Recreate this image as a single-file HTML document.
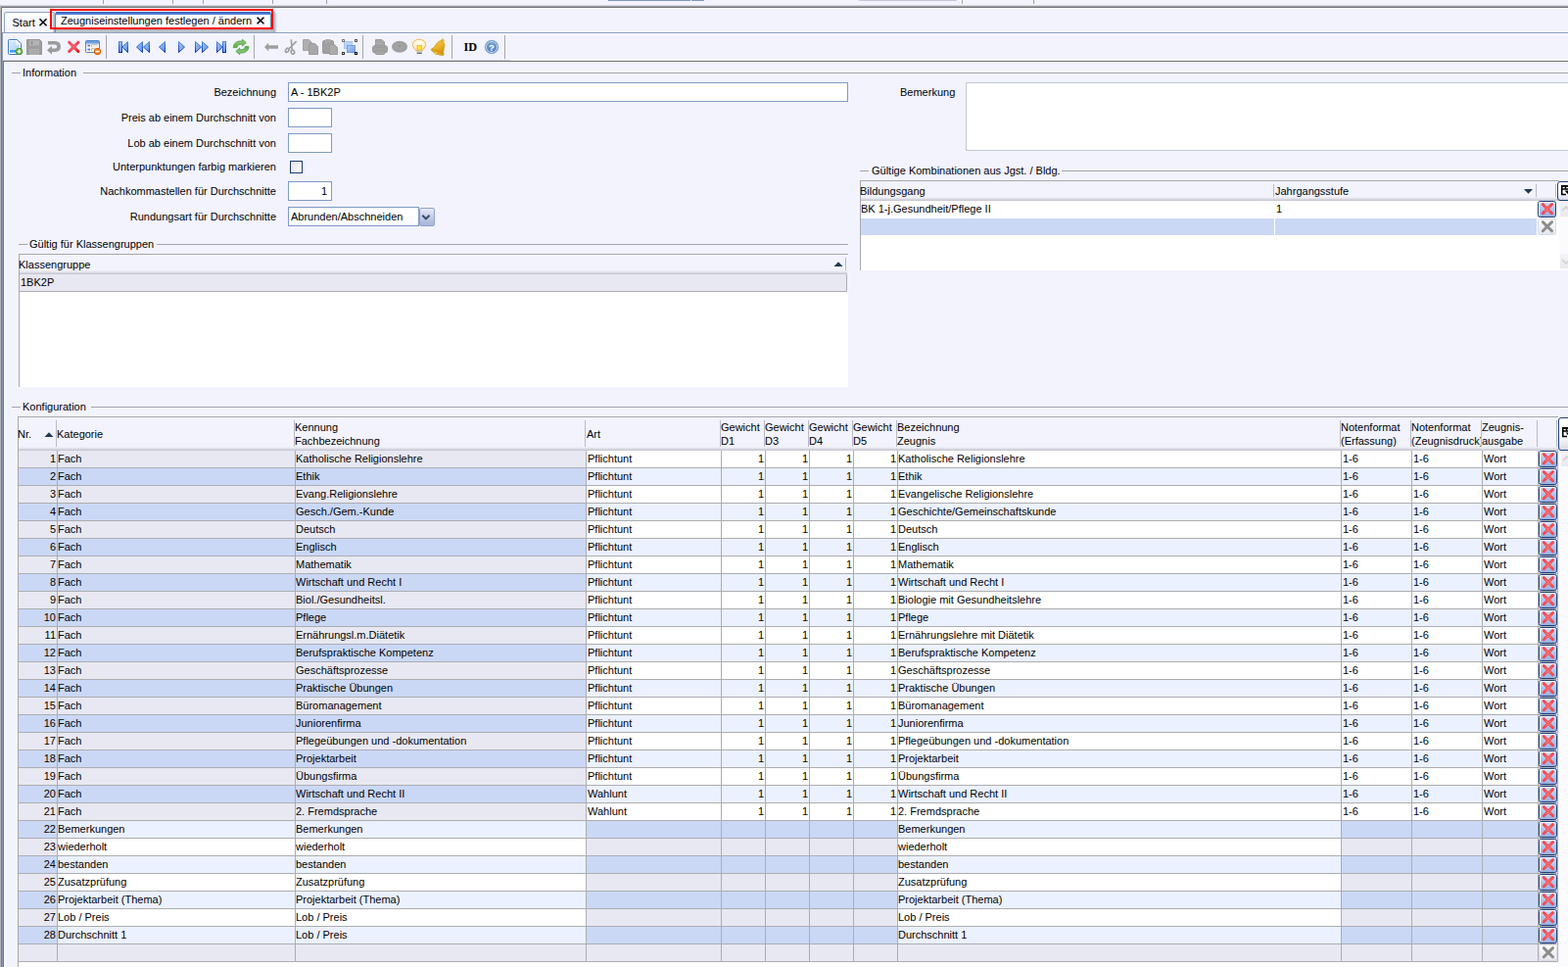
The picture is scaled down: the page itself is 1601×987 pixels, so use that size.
<!DOCTYPE html>
<html lang="de">
<head>
<meta charset="utf-8">
<title>Zeugniseinstellungen festlegen / ändern</title>
<style>
html,body{margin:0;padding:0;}
body{width:1601px;height:987px;overflow:hidden;position:relative;background:#F2F3FD;
 font-family:"Liberation Sans",sans-serif;font-size:11px;color:#000;line-height:13px;}
.abs,#page div,#page span,#page svg{position:absolute;}
#page{position:absolute;left:0;top:0;width:1601px;height:987px;overflow:hidden;}
.t{white-space:nowrap;height:13px;line-height:13px;}
.lbl{white-space:nowrap;height:13px;line-height:13px;text-align:right;width:270px;left:12px;}
.inp{background:#fff;border:1px solid #7F9AC4;box-sizing:border-box;height:20px;line-height:18px;white-space:nowrap;}
.hl{height:1px;background:#A3A3AB;}
.vs{width:1px;background:#A6A6AE;}
.row{left:0;width:1601px;height:18px;}
.row .c{top:0;height:17px;line-height:17px;white-space:nowrap;overflow:hidden;box-sizing:border-box;padding-left:0;}
.row .c.r{text-align:right;padding-right:1px;padding-left:0;}
.row .del,.row .del2{top:0;width:19px;height:17px;background:#F2F3FD;}
.row .del2{background:linear-gradient(#FFFFFF,#ECECF2);}
.hd{white-space:nowrap;line-height:14px;}
</style>
</head>
<body>
<svg width="0" height="0" style="position:absolute">
<defs>
<linearGradient id="gbtn" x1="0" y1="0" x2="0" y2="1"><stop offset="0" stop-color="#D6E2FA"/><stop offset="0.5" stop-color="#B2C5EE"/><stop offset="1" stop-color="#98B0E2"/></linearGradient>
<linearGradient id="gbtn2" x1="0" y1="0" x2="0" y2="1"><stop offset="0" stop-color="#FFFFFF"/><stop offset="1" stop-color="#E4E4EC"/></linearGradient>
<g id="redx">
 <rect x="0.5" y="0.5" width="18" height="16" rx="2" fill="url(#gbtn)" stroke="#1F3E7C"/>
 <path d="M1.500 15 V2 Q1.500 1.500 2 1.500 H17" fill="none" stroke="#FFFFFF" stroke-width="1" opacity="0.9"/>
 <path d="M5.300 3.600 L14.500 12.800 M14.500 3.600 L5.300 12.800" stroke="#F24A4E" stroke-width="2.900" stroke-linecap="round"/>
 <path d="M7.500 5.800 L12.300 10.600 M12.300 5.800 L7.500 10.600" stroke="#FF8888" stroke-width="1.200" stroke-linecap="round" opacity="0.7"/>
</g>
<g id="grayx">
 <rect x="0.5" y="0.5" width="18" height="16" rx="2" fill="url(#gbtn2)" stroke="#D9D9E1"/>
 <path d="M5.300 3.600 L14.500 12.800 M14.500 3.600 L5.300 12.800" stroke="#8C8C8C" stroke-width="2.900" stroke-linecap="round"/>
</g>
<g id="chooser">
 <path d="M0.75 0 H12 M0.75 0 V9.5 H5 M0.75 4 H12 M4.5 0 V4 M9.5 0 V4" fill="none" stroke="#000" stroke-width="1.5"/>
 <path d="M0 0.75 H12" stroke="#000" stroke-width="2.2"/>
 <path d="M3.5 5.5 H12 L7.75 10 Z" fill="#000"/>
</g>
<g id="chevup"><path d="M1 6 L5 2 L9 6" fill="none" stroke="#D4D4D8" stroke-width="1.8"/></g>
<g id="chevdn"><path d="M1 2 L5 6 L9 2" fill="none" stroke="#D4D4D8" stroke-width="1.8"/></g>
</defs>
</svg>
<div id="page">
<!-- top strip -->
<div style="left:105px;top:0;width:1px;height:4px;background:#A0A0AA"></div>
<div style="left:176px;top:0;width:1px;height:4px;background:#A0A0AA"></div>
<div style="left:207px;top:0;width:1px;height:4px;background:#A0A0AA"></div>
<div style="left:278px;top:0;width:1px;height:4px;background:#A0A0AA"></div>
<div style="left:333px;top:0;width:1px;height:4px;background:#A0A0AA"></div>
<div style="left:982px;top:0;width:1px;height:4px;background:#A0A0AA"></div>
<div style="left:1055px;top:0;width:1px;height:4px;background:#A0A0AA"></div>
<div style="left:621px;top:0;width:84px;height:1px;background:#7C97BE"></div>
<div style="left:706px;top:0;width:13px;height:1px;background:#7C97BE"></div>
<div style="left:877px;top:0;width:100px;height:1px;background:#C6C6D0;border-radius:0 0 3px 3px"></div>
<div style="left:0;top:5px;width:1601px;height:1px;background:#D6D6DF"></div>
<div style="left:0;top:6px;width:1601px;height:1px;background:#A2A2A9"></div>
<div style="left:0;top:7px;width:1601px;height:1px;background:#717174"></div>
<div style="left:0;top:8px;width:1601px;height:1px;background:#FDFDFF"></div>
<!-- left window border -->
<div style="left:0;top:6px;width:1px;height:981px;background:#B4B4B6"></div>
<div style="left:1px;top:7px;width:1px;height:980px;background:#77777A"></div>
<div style="left:2px;top:8px;width:1px;height:25px;background:#FDFDFF"></div>
<div style="left:2px;top:33px;width:1px;height:954px;background:#8A9EBE"></div>

<!-- tabs -->
<div style="left:3px;top:33px;width:1598px;height:1px;background:#8CA0BF"></div>
<div style="left:3px;top:34px;width:1598px;height:1px;background:#FBFBFF"></div>
<div id="tab1" style="left:4px;top:12px;width:52px;height:21px;border:1px solid #8FA4C4;border-bottom:none;border-radius:3px 3px 0 0;background:linear-gradient(#FFFFFF,#F4F5FD);box-sizing:border-box"></div>
<div class="t" style="left:12.5px;top:17px">Start</div>
<svg style="left:39px;top:18px" width="10" height="10" viewBox="0 0 10 10"><rect x="1" y="1" width="9" height="9" fill="#EDEDF4"/><path d="M1.500 1.300 L8.500 8.300 M8.500 1.300 L1.500 8.300" stroke="#000" stroke-width="1.500"/></svg>
<!-- shadow of annotation -->
<div style="left:54px;top:13px;width:2px;height:20px;background:linear-gradient(90deg,#D0D4DC,#A4ACB8)"></div>
<div id="tab2" style="left:56px;top:12px;width:221px;height:21px;border:1px solid #6F83A8;border-bottom:none;border-radius:3px 3px 0 0;background:#fff;box-sizing:border-box"></div>
<div style="left:57px;top:12px;width:219px;height:1px;background:#3F62B0"></div>
<div style="left:57px;top:13px;width:219px;height:2px;background:#4F7BDA"></div>
<div class="t" style="left:62px;top:15px">Zeugniseinstellungen festlegen / ändern</div>
<svg style="left:261px;top:16px" width="10" height="10" viewBox="0 0 10 10"><rect x="1" y="1" width="9" height="9" fill="#EDEDF4"/><path d="M1.600 1.700 L8.400 8.300 M8.400 1.700 L1.600 8.300" stroke="#000" stroke-width="1.500"/></svg>
<div style="left:57px;top:30px;width:223px;height:3px;background:linear-gradient(#AEB6BC,#C2C8CC)"></div>
<div style="left:279px;top:12px;width:1px;height:21px;background:#A4ACB8"></div>
<div style="left:280px;top:12px;width:1px;height:21px;background:#B6BCC8"></div>
<div style="left:281px;top:13px;width:1px;height:20px;background:#D0D4DE"></div>
<div style="left:282px;top:14px;width:1px;height:19px;background:#E4E6F0"></div>
<div id="redrect" style="left:51px;top:9px;width:228px;height:21px;border:2px solid #FF0000;box-sizing:border-box"></div>

<!-- toolbar -->
<div style="left:3px;top:62px;width:1598px;height:1px;background:#6E6E72"></div>
<div style="left:3px;top:61px;width:518px;height:1px;background:#D4D4DD"></div>
<div class="vs" style="left:108px;top:36px;height:24px"></div>
<div class="vs" style="left:259px;top:36px;height:24px"></div>
<div class="vs" style="left:370px;top:36px;height:24px"></div>
<div class="vs" style="left:461px;top:36px;height:24px"></div>
<div class="vs" style="left:515px;top:36px;height:24px"></div>
<svg style="left:0;top:34px" width="530" height="27" viewBox="0 34 530 27">
<defs>
<linearGradient id="nvs" x1="0" y1="0" x2="0" y2="1"><stop offset="0" stop-color="#4E8EE2"/><stop offset="1" stop-color="#0A30B4"/></linearGradient>
<linearGradient id="nvf" x1="0" y1="0" x2="1" y2="1"><stop offset="0" stop-color="#A8C8F2"/><stop offset="1" stop-color="#5C8EDE"/></linearGradient>
<linearGradient id="docf" x1="0" y1="0" x2="1" y2="1"><stop offset="0" stop-color="#D8E8FC"/><stop offset="1" stop-color="#AFD0F4"/></linearGradient>
<linearGradient id="redg" x1="0" y1="0" x2="1" y2="1"><stop offset="0" stop-color="#F85060"/><stop offset="0.5" stop-color="#F24050"/><stop offset="1" stop-color="#E61818"/></linearGradient>
<linearGradient id="grn" x1="0" y1="0" x2="0" y2="1"><stop offset="0" stop-color="#9AD28A"/><stop offset="1" stop-color="#5CAE48"/></linearGradient>
<linearGradient id="selg" x1="0" y1="0" x2="1" y2="1"><stop offset="0" stop-color="#B4CEF4"/><stop offset="1" stop-color="#729CE0"/></linearGradient>
<radialGradient id="bulbg" cx="0.45" cy="0.35" r="0.7"><stop offset="0" stop-color="#FFFFFF"/><stop offset="0.6" stop-color="#FFF6C8"/><stop offset="1" stop-color="#FFE08A"/></radialGradient>
<linearGradient id="bellg" x1="0" y1="0" x2="1" y2="0.6"><stop offset="0" stop-color="#F6D058"/><stop offset="0.6" stop-color="#E8B020"/><stop offset="1" stop-color="#D09410"/></linearGradient>
<radialGradient id="helpg" cx="0.5" cy="0.3" r="0.8"><stop offset="0" stop-color="#7FA8D8"/><stop offset="1" stop-color="#3F74B8"/></radialGradient>
</defs>
<!-- new document -->
<path d="M9.5 40.5 H17.5 L21.5 44.5 V54.5 Q21.5 55.5 20.5 55.5 H9.5 Q8.5 55.5 8.5 54.5 V41.5 Q8.5 40.5 9.5 40.5 Z" fill="#FFFFFF" stroke="#3E7ACE" stroke-width="1"/>
<path d="M10 42 H16.5 V45.5 H20 V54 H10 Z" fill="url(#docf)"/>
<rect x="10" y="51" width="8" height="2.5" fill="#3CA4F2"/>
<circle cx="19.5" cy="52.5" r="3.6" fill="#3E8E1E"/>
<circle cx="19.5" cy="52.5" r="2.9" fill="#58A832"/>
<path d="M19.5 50.4 V54.6 M17.4 52.5 H21.6" stroke="#fff" stroke-width="1.5"/>
<!-- save (disabled) -->
<path d="M27.5 40.5 H40.5 L42.5 42.5 V55.5 H27.5 Z" fill="#9E9E9E" stroke="#949494" stroke-width="1"/>
<rect x="30" y="41" width="10" height="5.5" fill="#B2B2B2"/>
<rect x="32" y="42" width="1.2" height="3.5" fill="#8C8C8C"/>
<rect x="30.5" y="50.5" width="9" height="5" fill="#A6A6A6" stroke="#B6B6B6" stroke-width="0.8"/>
<path d="M31 53 H39" stroke="#B6B6B6" stroke-width="0.8"/>
<!-- undo (disabled) -->
<path d="M49 42 H56.5 Q62 42.2 62 47.5 Q62 52.8 56.5 53 H53 V55.8 L48 51.3 L53 46.8 V49.6 H56 Q58.2 49.5 58.2 47.5 Q58.2 45.6 56 45.5 H49 Z" fill="#9C9C9C"/>
<!-- delete red X -->
<path d="M70.6 43.2 L79.9 52.5 M79.9 43.2 L70.6 52.5" stroke="url(#redg)" stroke-width="3" stroke-linecap="round"/>
<path d="M72.5 45.1 L78 50.6 M78 45.1 L72.5 50.6" stroke="#FF8088" stroke-width="1.2" stroke-linecap="round" opacity="0.6"/>
<!-- form with minus -->
<rect x="87.5" y="41.5" width="14" height="12" rx="0.8" fill="#F5F3EC" stroke="#5584CC"/>
<rect x="88" y="42" width="13" height="2.6" fill="#6E9EE0"/>
<path d="M89.5 46.5 H92 M89.5 50.5 H92" stroke="#3A62D2" stroke-width="1.3"/>
<path d="M93.5 48 V45.7 H99.5 M93.5 52 V49.7 H97" fill="none" stroke="#B4B4B0" stroke-width="0.9"/>
<circle cx="99.5" cy="52.5" r="3.6" fill="#D65A00"/>
<circle cx="99.5" cy="52.2" r="2.8" fill="#F07A10"/>
<rect x="97.4" y="51.7" width="4.2" height="1.6" fill="#fff"/>
<!-- nav: first -->
<g stroke="url(#nvs)" fill="url(#nvf)" stroke-width="1" stroke-linejoin="miter">
<rect x="121.5" y="42.5" width="3" height="11"/>
<path d="M130.5 42.5 V53.5 L124.8 48 Z"/>
<path d="M145.5 42.5 V53.5 L139.5 48 Z"/>
<path d="M152.5 42.5 V53.5 L146.5 48 Z"/>
<path d="M168.5 42.5 V53.5 L162.5 48 Z"/>
<path d="M182.5 42.5 V53.5 L188.5 48 Z"/>
<path d="M199.5 42.5 V53.5 L205.5 48 Z"/>
<path d="M206.5 42.5 V53.5 L212.5 48 Z"/>
<path d="M221.5 42.5 V53.5 L227.2 48 Z"/>
<rect x="227.5" y="42.5" width="3" height="11"/>
</g>
<!-- refresh -->
<g fill="url(#grn)" stroke="#4A9A3A" stroke-width="0.8" stroke-linejoin="round">
<path id="rfa" d="M238.300 48.600 C238.300 44.500 241.500 42 245.500 42 H247.500 V40.300 L251.300 43.600 L247.500 46.900 V45.300 H245.500 C243.500 45.300 242.200 46.500 242 48.600 Z"/>
<use href="#rfa" transform="rotate(180 246.100 48)"/>
</g>
<!-- back arrow (disabled) -->
<path d="M270 48 L274.2 43.8 V46.2 H284 V49.8 H274.2 V52.2 Z" fill="#9E9E9E"/>
<!-- scissors (disabled) -->
<g fill="none" stroke="#A0A0A0">
<path d="M297.300 40.200 L298.200 50.800 M302.700 42.200 L294.800 50" stroke-width="1.700"/>
<ellipse cx="293.200" cy="51.300" rx="1.500" ry="2.200" stroke-width="1.700" transform="rotate(30 293.2 51.3)"/>
<ellipse cx="298.900" cy="53.200" rx="1.700" ry="2" stroke-width="1.700" transform="rotate(-20 298.9 53.2)"/>
</g>
<!-- copy (disabled) -->
<path d="M309.500 40.500 H315.5 L318.5 43.5 V51.500 H309.500 Z" fill="#B0B0B0" stroke="#A2A2A2"/>
<path d="M315.500 44.500 H321.5 L324.500 47.5 V55.500 H315.500 Z" fill="#A8A8A8" stroke="#9A9A9A"/>
<!-- paste (disabled) -->
<rect x="329.500" y="41.500" width="11" height="13" rx="1.500" fill="#A0A0A0" stroke="#989898"/>
<rect x="332" y="40" width="6" height="3" rx="1" fill="#AAAAAA"/>
<path d="M336.500 45.500 H341.5 L344.500 48.5 V55.500 H336.500 Z" fill="#ACACAC" stroke="#9C9C9C"/>
<!-- select all -->
<rect x="351.500" y="42.500" width="8" height="7" fill="#BCD3F6" stroke="#A6C4F2"/>
<rect x="354.500" y="46.500" width="8" height="7" fill="url(#selg)" stroke="#6A98E6" stroke-width="0.9"/>
<rect x="349" y="40" width="3" height="3" fill="#787878"/><rect x="350" y="41" width="1" height="1" fill="#fff"/>
<rect x="362" y="40" width="3" height="3" fill="#585858"/><rect x="363" y="41" width="1" height="1" fill="#fff"/>
<rect x="349" y="53" width="3" height="3" fill="#383838"/><rect x="350" y="54" width="1" height="1" fill="#fff"/>
<rect x="362" y="53" width="3" height="3" fill="#000"/><rect x="363" y="54" width="1" height="1" fill="#fff"/>
<!-- printer (disabled) -->
<path d="M383.500 40.500 H390 L392.500 43 V47 H383.500 Z" fill="#A8A8A8" stroke="#9C9C9C"/>
<rect x="380.500" y="46.500" width="15" height="7.500" rx="2.500" fill="#A2A2A2" stroke="#9A9A9A"/>
<rect x="383.500" y="52" width="9" height="3.500" rx="0.800" fill="#A8A8A8" stroke="#989898"/>
<path d="M383 48.5 H393" stroke="#979797" stroke-width="0.8"/>
<!-- disc (disabled) -->
<ellipse cx="408" cy="47.800" rx="8" ry="6" fill="#A2A2A2"/>
<ellipse cx="408" cy="47.500" rx="6" ry="4.200" fill="none" stroke="#9A9A9A" stroke-width="0.800"/>
<circle cx="408" cy="47" r="1" fill="#8A8A8A"/>
<!-- bulb -->
<path d="M428 40.300 C432.300 40.300 434.600 43 434.600 45.600 C434.600 48.500 432 50 431 52 H425 C424 50 421.400 48.500 421.400 45.600 C421.400 43 423.700 40.300 428 40.300 Z" fill="url(#bulbg)" stroke="#F2A64A" stroke-width="0.900"/>
<rect x="426" y="46.300" width="4.400" height="5" fill="#FFE23A" stroke="#F4A63C" stroke-width="0.800"/>
<rect x="425.700" y="51.600" width="5" height="3" fill="#C4C8CC"/>
<rect x="425.700" y="53.800" width="5" height="1.200" fill="#6A6A6A"/>
<!-- bell -->
<g transform="translate(0.8 0.4) rotate(24 448 48)">
<path d="M448 41.200 C451.500 41.200 452.300 45 452.800 48.500 C453.200 51.200 454.500 52 455 53.300 H441 C441.500 52 442.800 51.200 443.200 48.500 C443.700 45 444.500 41.200 448 41.200 Z" fill="url(#bellg)" stroke="#D09A18" stroke-width="0.800"/>
<circle cx="448" cy="40.200" r="1.300" fill="#F0C030" stroke="#D09A18" stroke-width="0.600"/>
<ellipse cx="448" cy="53.600" rx="6.600" ry="1.500" fill="#E0A81C" stroke="#C88E10" stroke-width="0.600"/>
<circle cx="447" cy="54.600" r="1.400" fill="#F4D060" stroke="#C88E10" stroke-width="0.500"/>
</g>
<!-- ID -->
<text x="473.600" y="52" font-family="'Liberation Serif',serif" font-weight="bold" font-size="12.200px" fill="#000">ID</text>
<!-- help -->
<circle cx="502" cy="48" r="6.800" fill="#5C8AC8" stroke="#7FA4D6" stroke-width="0.800"/>
<circle cx="502" cy="48" r="5.500" fill="url(#helpg)" stroke="#D2E0F4" stroke-width="1"/>
<text x="502" y="51.500" text-anchor="middle" font-family="'Liberation Sans',sans-serif" font-weight="bold" font-size="9.500px" fill="#fff">?</text>
</svg>


<!-- panel -->
<div style="left:3px;top:62px;width:1px;height:925px;background:#707074"></div>
<div style="left:4px;top:63px;width:1px;height:924px;background:#FCFCFF"></div>
<div style="left:4px;top:63px;width:1597px;height:1px;background:#FAFAFF"></div>

<!-- Information group -->
<div class="hl" style="left:12px;top:74px;width:9px"></div>
<div class="hl" style="left:85px;top:74px;width:1516px"></div>
<div class="t" style="left:23px;top:68px">Information</div>

<div class="lbl" style="top:88px">Bezeichnung</div>
<div class="inp" style="left:294px;top:84px;width:572px;padding-left:2px">A - 1BK2P</div>
<div class="lbl" style="top:114px">Preis ab einem Durchschnitt von</div>
<div class="inp" style="left:294px;top:110px;width:45px"></div>
<div class="lbl" style="top:140px">Lob ab einem Durchschnitt von</div>
<div class="inp" style="left:294px;top:136px;width:45px"></div>
<div class="lbl" style="top:164px">Unterpunktungen farbig markieren</div>
<div style="left:296px;top:164px;width:13px;height:13px;box-sizing:border-box;border:1px solid #1C3B70;background:linear-gradient(135deg,#E2E2EA,#FFFFFF)"></div>
<div class="lbl" style="top:189px">Nachkommastellen für Durchschnitte</div>
<div class="inp" style="left:294px;top:185px;width:45px;text-align:right;padding-right:4px">1</div>
<div class="lbl" style="top:215px">Rundungsart für Durchschnitte</div>
<div class="inp" style="left:294px;top:211px;width:134px;padding-left:2px">Abrunden/Abschneiden</div>
<div style="left:428px;top:212px;width:16px;height:19px;box-sizing:border-box;border:1px solid #8EA3CE;border-radius:2px;background:linear-gradient(#E6EAF8,#C3CCE8 50%,#A7B5DA)"></div>
<svg style="left:430px;top:218px" width="10" height="8" viewBox="0 0 10 8"><path d="M1.300 1.800 L4.900 5.400 L8.500 1.800" fill="none" stroke="#3B4868" stroke-width="2"/></svg>

<div class="t" style="left:919px;top:88px">Bemerkung</div>
<div style="left:986px;top:84px;width:640px;height:70px;box-sizing:border-box;border:1px solid #C3C6D2;background:#fff"></div>

<!-- Gültige Kombinationen -->
<div class="hl" style="left:878px;top:174px;width:9px"></div>
<div class="hl" style="left:1084px;top:174px;width:517px"></div>
<div class="t" style="left:890px;top:168px">Gültige Kombinationen aus Jgst. / Bldg.</div>
<div id="grid2">
<div style="left:878px;top:184px;width:714px;height:1px;background:#A8A8AE"></div>
<div style="left:878px;top:184px;width:1px;height:92px;background:#A8A8AE"></div>
<div style="left:879px;top:185px;width:713px;height:17px;background:#F2F3FD"></div>
<div style="left:879px;top:201px;width:713px;height:1px;background:#EEEEF6"></div>
<div style="left:879px;top:202px;width:713px;height:1px;background:#E4E4EC"></div>
<div style="left:879px;top:203px;width:713px;height:1px;background:#D6D6E0"></div>
<div style="left:879px;top:204px;width:713px;height:1px;background:#C8C8D2"></div>
<div style="left:879px;top:205px;width:714px;height:71px;background:#fff"></div>
<div class="t" style="left:878px;top:189px">Bildungsgang</div>
<div class="t" style="left:1302px;top:189px">Jahrgangsstufe</div>
<div class="vs" style="left:1300px;top:188px;height:13px;background:#B9B9C2"></div>
<div class="vs" style="left:1568px;top:188px;height:13px;background:#B9B9C2"></div>
<div class="vs" style="left:1588px;top:188px;height:13px;background:#B9B9C2"></div>
<svg style="left:1556px;top:193px" width="9" height="5" viewBox="0 0 9 5"><path d="M0 0 L9 0 L4.500 4.700 Z" fill="#1F3A55"/></svg>
<div class="t" style="left:879px;top:207px">BK 1-j.Gesundheit/Pflege II</div>
<div class="t" style="left:1303px;top:207px">1</div>
<div style="left:879px;top:223px;width:422px;height:17px;background:#CAD8F6"></div>
<div style="left:1302px;top:223px;width:267px;height:17px;background:#CAD8F6"></div>
<div style="left:1301px;top:205px;width:1px;height:35px;background:#FFFFFF"></div>
<svg style="left:1570px;top:205px" width="19" height="17" viewBox="0 0 19 17"><use href="#redx"/></svg>
<svg style="left:1570px;top:223px" width="19" height="17" viewBox="0 0 19 17"><use href="#grayx"/></svg>
<div style="left:1592px;top:205px;width:9px;height:71px;background:#FBFBFE"></div>
<div style="left:1593px;top:206px;width:8px;height:15px;background:linear-gradient(#F4F4F8,#E9E9EE)"></div>
<div style="left:1593px;top:259px;width:8px;height:15px;background:linear-gradient(#F4F4F8,#E9E9EE)"></div>
<svg style="left:1594px;top:209px" width="10" height="8" viewBox="0 0 10 8"><use href="#chevup"/></svg>
<svg style="left:1594px;top:263px" width="10" height="8" viewBox="0 0 10 8"><use href="#chevdn"/></svg>
<div style="left:1590px;top:185px;width:20px;height:20px;box-sizing:border-box;border:1.5px solid #1F3E7C;border-radius:3px;background:linear-gradient(#FFFFFF 55%,#DADAE4)"></div>
<svg style="left:1594px;top:189px" width="8" height="11" viewBox="0 0 8 11"><use href="#chooser"/></svg>
</div>

<!-- Klassengruppen -->
<div class="hl" style="left:19px;top:249px;width:9px"></div>
<div class="hl" style="left:160px;top:249px;width:706px"></div>
<div class="t" style="left:30px;top:243px">Gültig für Klassengruppen</div>
<div id="grid1">
<div style="left:19px;top:259px;width:847px;height:1px;background:#A8A8AE"></div>
<div style="left:19px;top:259px;width:1px;height:136px;background:#A8A8AE"></div>
<div style="left:20px;top:297px;width:846px;height:98px;background:#fff"></div>
<div class="t" style="left:19px;top:264px">Klassengruppe</div>
<svg style="left:851px;top:267px" width="10" height="5" viewBox="0 0 10 5"><path d="M0.500 5 L9.500 5 L5 0.300 Z" fill="#1F3A55"/></svg>
<div class="vs" style="left:863px;top:263px;height:13px;background:#B9B9C2"></div>
<div style="left:20px;top:276px;width:845px;height:1px;background:#EEEEF6"></div>
<div style="left:20px;top:277px;width:845px;height:1px;background:#E4E4EC"></div>
<div style="left:20px;top:278px;width:845px;height:1px;background:#D6D6E0"></div>
<div style="left:20px;top:279px;width:845px;height:1px;background:#C8C8D2"></div>
<div style="left:20px;top:280px;width:845px;height:17px;background:#E8E8F2"></div>
<div style="left:20px;top:297px;width:845px;height:1px;background:#ADADB0"></div>
<div style="left:864px;top:280px;width:1px;height:18px;background:#ADADB0"></div>
<div class="t" style="left:21px;top:282px">1BK2P</div>
</div>

<!-- Konfiguration -->
<div class="hl" style="left:12px;top:415px;width:9px"></div>
<div class="hl" style="left:93px;top:415px;width:1508px"></div>
<div class="t" style="left:23px;top:409px">Konfiguration</div>
<div id="g3frame">
<div style="left:18px;top:425px;width:1573px;height:1px;background:#A8A8AE"></div>
<div style="left:18px;top:425px;width:1px;height:562px;background:#A8A8AE"></div>
<div style="left:19px;top:982px;width:1573px;height:5px;background:#fff"></div>
<div style="left:19px;top:456px;width:1572px;height:1px;background:#EEEEF6"></div>
<div style="left:19px;top:457px;width:1572px;height:1px;background:#E4E4EC"></div>
<div style="left:19px;top:458px;width:1572px;height:1px;background:#D6D6E0"></div>
<div style="left:19px;top:459px;width:1572px;height:523px;background:#ADADB0"></div>
<div style="left:19px;top:459px;width:1571px;height:1px;background:#C8C8D2"></div>
<div style="left:1590px;top:459px;width:1px;height:523px;background:#B6B6BE"></div>
<div class="vs" style="left:57px;top:429px;height:27px;background:#B9B9C2"></div>
<div class="vs" style="left:300px;top:429px;height:27px;background:#B9B9C2"></div>
<div class="vs" style="left:597px;top:429px;height:27px;background:#B9B9C2"></div>
<div class="vs" style="left:735px;top:429px;height:27px;background:#B9B9C2"></div>
<div class="vs" style="left:780px;top:429px;height:27px;background:#B9B9C2"></div>
<div class="vs" style="left:825px;top:429px;height:27px;background:#B9B9C2"></div>
<div class="vs" style="left:870px;top:429px;height:27px;background:#B9B9C2"></div>
<div class="vs" style="left:915px;top:429px;height:27px;background:#B9B9C2"></div>
<div class="vs" style="left:1368px;top:429px;height:27px;background:#B9B9C2"></div>
<div class="vs" style="left:1440px;top:429px;height:27px;background:#B9B9C2"></div>
<div class="vs" style="left:1512px;top:429px;height:27px;background:#B9B9C2"></div>
<div class="vs" style="left:1569px;top:429px;height:27px;background:#B9B9C2"></div>
<div class="vs" style="left:1589px;top:429px;height:27px;background:#B9B9C2"></div>
<div class="hd" style="left:18px;top:436px">Nr.</div>
<svg style="left:45px;top:441px" width="10" height="5" viewBox="0 0 10 5"><path d="M0.500 5 L9.500 5 L5 0.300 Z" fill="#1F3A55"/></svg>
<div class="hd" style="left:58px;top:436px">Kategorie</div>
<div class="hd" style="left:301px;top:429px">Kennung<br>Fachbezeichnung</div>
<div class="hd" style="left:599px;top:436px">Art</div>
<div class="hd" style="left:736px;top:429px">Gewicht<br>D1</div>
<div class="hd" style="left:781px;top:429px">Gewicht<br>D3</div>
<div class="hd" style="left:826px;top:429px">Gewicht<br>D4</div>
<div class="hd" style="left:871px;top:429px">Gewicht<br>D5</div>
<div class="hd" style="left:916px;top:429px">Bezeichnung<br>Zeugnis</div>
<div class="hd" style="left:1369px;top:429px">Notenformat<br>(Erfassung)</div>
<div class="hd" style="left:1441px;top:429px;width:71px;overflow:hidden">Notenformat<br>(Zeugnisdruck)</div>
<div class="hd" style="left:1513px;top:429px">Zeugnis-<br>ausgabe</div>

</div>
<div id="grid3">
<div class="row" style="top:460px">
<div class="c r" style="left:19px;width:39px;background:#E8E8F2">1</div>
<div class="c" style="left:59px;width:242px;background:#E8E8F2">Fach</div>
<div class="c" style="left:302px;width:296px;background:#E8E8F2">Katholische Religionslehre</div>
<div class="c" style="left:599px;width:137px;background:#FFFFFF;padding-left:1px">Pflichtunt</div>
<div class="c r" style="left:737px;width:44px;background:#FFFFFF">1</div>
<div class="c r" style="left:782px;width:44px;background:#FFFFFF">1</div>
<div class="c r" style="left:827px;width:44px;background:#FFFFFF">1</div>
<div class="c r" style="left:872px;width:44px;background:#FFFFFF">1</div>
<div class="c" style="left:917px;width:452px;background:#FFFFFF">Katholische Religionslehre</div>
<div class="c" style="left:1370px;width:71px;background:#FFFFFF;padding-left:1px">1-6</div>
<div class="c" style="left:1442px;width:71px;background:#FFFFFF;padding-left:1px">1-6</div>
<div class="c" style="left:1514px;width:56px;background:#FFFFFF;padding-left:1px">Wort</div>
<div class="del" style="left:1571px"><svg width="19" height="17" viewBox="0 0 19 17"><use href="#redx"/></svg></div>
</div>
<div class="row" style="top:478px">
<div class="c r" style="left:19px;width:39px;background:#CAD8F6">2</div>
<div class="c" style="left:59px;width:242px;background:#CAD8F6">Fach</div>
<div class="c" style="left:302px;width:296px;background:#CAD8F6">Ethik</div>
<div class="c" style="left:599px;width:137px;background:#EBF1FF;padding-left:1px">Pflichtunt</div>
<div class="c r" style="left:737px;width:44px;background:#EBF1FF">1</div>
<div class="c r" style="left:782px;width:44px;background:#EBF1FF">1</div>
<div class="c r" style="left:827px;width:44px;background:#EBF1FF">1</div>
<div class="c r" style="left:872px;width:44px;background:#EBF1FF">1</div>
<div class="c" style="left:917px;width:452px;background:#EBF1FF">Ethik</div>
<div class="c" style="left:1370px;width:71px;background:#EBF1FF;padding-left:1px">1-6</div>
<div class="c" style="left:1442px;width:71px;background:#EBF1FF;padding-left:1px">1-6</div>
<div class="c" style="left:1514px;width:56px;background:#EBF1FF;padding-left:1px">Wort</div>
<div class="del" style="left:1571px"><svg width="19" height="17" viewBox="0 0 19 17"><use href="#redx"/></svg></div>
</div>
<div class="row" style="top:496px">
<div class="c r" style="left:19px;width:39px;background:#E8E8F2">3</div>
<div class="c" style="left:59px;width:242px;background:#E8E8F2">Fach</div>
<div class="c" style="left:302px;width:296px;background:#E8E8F2">Evang.Religionslehre</div>
<div class="c" style="left:599px;width:137px;background:#FFFFFF;padding-left:1px">Pflichtunt</div>
<div class="c r" style="left:737px;width:44px;background:#FFFFFF">1</div>
<div class="c r" style="left:782px;width:44px;background:#FFFFFF">1</div>
<div class="c r" style="left:827px;width:44px;background:#FFFFFF">1</div>
<div class="c r" style="left:872px;width:44px;background:#FFFFFF">1</div>
<div class="c" style="left:917px;width:452px;background:#FFFFFF">Evangelische Religionslehre</div>
<div class="c" style="left:1370px;width:71px;background:#FFFFFF;padding-left:1px">1-6</div>
<div class="c" style="left:1442px;width:71px;background:#FFFFFF;padding-left:1px">1-6</div>
<div class="c" style="left:1514px;width:56px;background:#FFFFFF;padding-left:1px">Wort</div>
<div class="del" style="left:1571px"><svg width="19" height="17" viewBox="0 0 19 17"><use href="#redx"/></svg></div>
</div>
<div class="row" style="top:514px">
<div class="c r" style="left:19px;width:39px;background:#CAD8F6">4</div>
<div class="c" style="left:59px;width:242px;background:#CAD8F6">Fach</div>
<div class="c" style="left:302px;width:296px;background:#CAD8F6">Gesch./Gem.-Kunde</div>
<div class="c" style="left:599px;width:137px;background:#EBF1FF;padding-left:1px">Pflichtunt</div>
<div class="c r" style="left:737px;width:44px;background:#EBF1FF">1</div>
<div class="c r" style="left:782px;width:44px;background:#EBF1FF">1</div>
<div class="c r" style="left:827px;width:44px;background:#EBF1FF">1</div>
<div class="c r" style="left:872px;width:44px;background:#EBF1FF">1</div>
<div class="c" style="left:917px;width:452px;background:#EBF1FF">Geschichte/Gemeinschaftskunde</div>
<div class="c" style="left:1370px;width:71px;background:#EBF1FF;padding-left:1px">1-6</div>
<div class="c" style="left:1442px;width:71px;background:#EBF1FF;padding-left:1px">1-6</div>
<div class="c" style="left:1514px;width:56px;background:#EBF1FF;padding-left:1px">Wort</div>
<div class="del" style="left:1571px"><svg width="19" height="17" viewBox="0 0 19 17"><use href="#redx"/></svg></div>
</div>
<div class="row" style="top:532px">
<div class="c r" style="left:19px;width:39px;background:#E8E8F2">5</div>
<div class="c" style="left:59px;width:242px;background:#E8E8F2">Fach</div>
<div class="c" style="left:302px;width:296px;background:#E8E8F2">Deutsch</div>
<div class="c" style="left:599px;width:137px;background:#FFFFFF;padding-left:1px">Pflichtunt</div>
<div class="c r" style="left:737px;width:44px;background:#FFFFFF">1</div>
<div class="c r" style="left:782px;width:44px;background:#FFFFFF">1</div>
<div class="c r" style="left:827px;width:44px;background:#FFFFFF">1</div>
<div class="c r" style="left:872px;width:44px;background:#FFFFFF">1</div>
<div class="c" style="left:917px;width:452px;background:#FFFFFF">Deutsch</div>
<div class="c" style="left:1370px;width:71px;background:#FFFFFF;padding-left:1px">1-6</div>
<div class="c" style="left:1442px;width:71px;background:#FFFFFF;padding-left:1px">1-6</div>
<div class="c" style="left:1514px;width:56px;background:#FFFFFF;padding-left:1px">Wort</div>
<div class="del" style="left:1571px"><svg width="19" height="17" viewBox="0 0 19 17"><use href="#redx"/></svg></div>
</div>
<div class="row" style="top:550px">
<div class="c r" style="left:19px;width:39px;background:#CAD8F6">6</div>
<div class="c" style="left:59px;width:242px;background:#CAD8F6">Fach</div>
<div class="c" style="left:302px;width:296px;background:#CAD8F6">Englisch</div>
<div class="c" style="left:599px;width:137px;background:#EBF1FF;padding-left:1px">Pflichtunt</div>
<div class="c r" style="left:737px;width:44px;background:#EBF1FF">1</div>
<div class="c r" style="left:782px;width:44px;background:#EBF1FF">1</div>
<div class="c r" style="left:827px;width:44px;background:#EBF1FF">1</div>
<div class="c r" style="left:872px;width:44px;background:#EBF1FF">1</div>
<div class="c" style="left:917px;width:452px;background:#EBF1FF">Englisch</div>
<div class="c" style="left:1370px;width:71px;background:#EBF1FF;padding-left:1px">1-6</div>
<div class="c" style="left:1442px;width:71px;background:#EBF1FF;padding-left:1px">1-6</div>
<div class="c" style="left:1514px;width:56px;background:#EBF1FF;padding-left:1px">Wort</div>
<div class="del" style="left:1571px"><svg width="19" height="17" viewBox="0 0 19 17"><use href="#redx"/></svg></div>
</div>
<div class="row" style="top:568px">
<div class="c r" style="left:19px;width:39px;background:#E8E8F2">7</div>
<div class="c" style="left:59px;width:242px;background:#E8E8F2">Fach</div>
<div class="c" style="left:302px;width:296px;background:#E8E8F2">Mathematik</div>
<div class="c" style="left:599px;width:137px;background:#FFFFFF;padding-left:1px">Pflichtunt</div>
<div class="c r" style="left:737px;width:44px;background:#FFFFFF">1</div>
<div class="c r" style="left:782px;width:44px;background:#FFFFFF">1</div>
<div class="c r" style="left:827px;width:44px;background:#FFFFFF">1</div>
<div class="c r" style="left:872px;width:44px;background:#FFFFFF">1</div>
<div class="c" style="left:917px;width:452px;background:#FFFFFF">Mathematik</div>
<div class="c" style="left:1370px;width:71px;background:#FFFFFF;padding-left:1px">1-6</div>
<div class="c" style="left:1442px;width:71px;background:#FFFFFF;padding-left:1px">1-6</div>
<div class="c" style="left:1514px;width:56px;background:#FFFFFF;padding-left:1px">Wort</div>
<div class="del" style="left:1571px"><svg width="19" height="17" viewBox="0 0 19 17"><use href="#redx"/></svg></div>
</div>
<div class="row" style="top:586px">
<div class="c r" style="left:19px;width:39px;background:#CAD8F6">8</div>
<div class="c" style="left:59px;width:242px;background:#CAD8F6">Fach</div>
<div class="c" style="left:302px;width:296px;background:#CAD8F6">Wirtschaft und Recht I</div>
<div class="c" style="left:599px;width:137px;background:#EBF1FF;padding-left:1px">Pflichtunt</div>
<div class="c r" style="left:737px;width:44px;background:#EBF1FF">1</div>
<div class="c r" style="left:782px;width:44px;background:#EBF1FF">1</div>
<div class="c r" style="left:827px;width:44px;background:#EBF1FF">1</div>
<div class="c r" style="left:872px;width:44px;background:#EBF1FF">1</div>
<div class="c" style="left:917px;width:452px;background:#EBF1FF">Wirtschaft und Recht I</div>
<div class="c" style="left:1370px;width:71px;background:#EBF1FF;padding-left:1px">1-6</div>
<div class="c" style="left:1442px;width:71px;background:#EBF1FF;padding-left:1px">1-6</div>
<div class="c" style="left:1514px;width:56px;background:#EBF1FF;padding-left:1px">Wort</div>
<div class="del" style="left:1571px"><svg width="19" height="17" viewBox="0 0 19 17"><use href="#redx"/></svg></div>
</div>
<div class="row" style="top:604px">
<div class="c r" style="left:19px;width:39px;background:#E8E8F2">9</div>
<div class="c" style="left:59px;width:242px;background:#E8E8F2">Fach</div>
<div class="c" style="left:302px;width:296px;background:#E8E8F2">Biol./Gesundheitsl.</div>
<div class="c" style="left:599px;width:137px;background:#FFFFFF;padding-left:1px">Pflichtunt</div>
<div class="c r" style="left:737px;width:44px;background:#FFFFFF">1</div>
<div class="c r" style="left:782px;width:44px;background:#FFFFFF">1</div>
<div class="c r" style="left:827px;width:44px;background:#FFFFFF">1</div>
<div class="c r" style="left:872px;width:44px;background:#FFFFFF">1</div>
<div class="c" style="left:917px;width:452px;background:#FFFFFF">Biologie mit Gesundheitslehre</div>
<div class="c" style="left:1370px;width:71px;background:#FFFFFF;padding-left:1px">1-6</div>
<div class="c" style="left:1442px;width:71px;background:#FFFFFF;padding-left:1px">1-6</div>
<div class="c" style="left:1514px;width:56px;background:#FFFFFF;padding-left:1px">Wort</div>
<div class="del" style="left:1571px"><svg width="19" height="17" viewBox="0 0 19 17"><use href="#redx"/></svg></div>
</div>
<div class="row" style="top:622px">
<div class="c r" style="left:19px;width:39px;background:#CAD8F6">10</div>
<div class="c" style="left:59px;width:242px;background:#CAD8F6">Fach</div>
<div class="c" style="left:302px;width:296px;background:#CAD8F6">Pflege</div>
<div class="c" style="left:599px;width:137px;background:#EBF1FF;padding-left:1px">Pflichtunt</div>
<div class="c r" style="left:737px;width:44px;background:#EBF1FF">1</div>
<div class="c r" style="left:782px;width:44px;background:#EBF1FF">1</div>
<div class="c r" style="left:827px;width:44px;background:#EBF1FF">1</div>
<div class="c r" style="left:872px;width:44px;background:#EBF1FF">1</div>
<div class="c" style="left:917px;width:452px;background:#EBF1FF">Pflege</div>
<div class="c" style="left:1370px;width:71px;background:#EBF1FF;padding-left:1px">1-6</div>
<div class="c" style="left:1442px;width:71px;background:#EBF1FF;padding-left:1px">1-6</div>
<div class="c" style="left:1514px;width:56px;background:#EBF1FF;padding-left:1px">Wort</div>
<div class="del" style="left:1571px"><svg width="19" height="17" viewBox="0 0 19 17"><use href="#redx"/></svg></div>
</div>
<div class="row" style="top:640px">
<div class="c r" style="left:19px;width:39px;background:#E8E8F2">11</div>
<div class="c" style="left:59px;width:242px;background:#E8E8F2">Fach</div>
<div class="c" style="left:302px;width:296px;background:#E8E8F2">Ernährungsl.m.Diätetik</div>
<div class="c" style="left:599px;width:137px;background:#FFFFFF;padding-left:1px">Pflichtunt</div>
<div class="c r" style="left:737px;width:44px;background:#FFFFFF">1</div>
<div class="c r" style="left:782px;width:44px;background:#FFFFFF">1</div>
<div class="c r" style="left:827px;width:44px;background:#FFFFFF">1</div>
<div class="c r" style="left:872px;width:44px;background:#FFFFFF">1</div>
<div class="c" style="left:917px;width:452px;background:#FFFFFF">Ernährungslehre mit Diätetik</div>
<div class="c" style="left:1370px;width:71px;background:#FFFFFF;padding-left:1px">1-6</div>
<div class="c" style="left:1442px;width:71px;background:#FFFFFF;padding-left:1px">1-6</div>
<div class="c" style="left:1514px;width:56px;background:#FFFFFF;padding-left:1px">Wort</div>
<div class="del" style="left:1571px"><svg width="19" height="17" viewBox="0 0 19 17"><use href="#redx"/></svg></div>
</div>
<div class="row" style="top:658px">
<div class="c r" style="left:19px;width:39px;background:#CAD8F6">12</div>
<div class="c" style="left:59px;width:242px;background:#CAD8F6">Fach</div>
<div class="c" style="left:302px;width:296px;background:#CAD8F6">Berufspraktische Kompetenz</div>
<div class="c" style="left:599px;width:137px;background:#EBF1FF;padding-left:1px">Pflichtunt</div>
<div class="c r" style="left:737px;width:44px;background:#EBF1FF">1</div>
<div class="c r" style="left:782px;width:44px;background:#EBF1FF">1</div>
<div class="c r" style="left:827px;width:44px;background:#EBF1FF">1</div>
<div class="c r" style="left:872px;width:44px;background:#EBF1FF">1</div>
<div class="c" style="left:917px;width:452px;background:#EBF1FF">Berufspraktische Kompetenz</div>
<div class="c" style="left:1370px;width:71px;background:#EBF1FF;padding-left:1px">1-6</div>
<div class="c" style="left:1442px;width:71px;background:#EBF1FF;padding-left:1px">1-6</div>
<div class="c" style="left:1514px;width:56px;background:#EBF1FF;padding-left:1px">Wort</div>
<div class="del" style="left:1571px"><svg width="19" height="17" viewBox="0 0 19 17"><use href="#redx"/></svg></div>
</div>
<div class="row" style="top:676px">
<div class="c r" style="left:19px;width:39px;background:#E8E8F2">13</div>
<div class="c" style="left:59px;width:242px;background:#E8E8F2">Fach</div>
<div class="c" style="left:302px;width:296px;background:#E8E8F2">Geschäftsprozesse</div>
<div class="c" style="left:599px;width:137px;background:#FFFFFF;padding-left:1px">Pflichtunt</div>
<div class="c r" style="left:737px;width:44px;background:#FFFFFF">1</div>
<div class="c r" style="left:782px;width:44px;background:#FFFFFF">1</div>
<div class="c r" style="left:827px;width:44px;background:#FFFFFF">1</div>
<div class="c r" style="left:872px;width:44px;background:#FFFFFF">1</div>
<div class="c" style="left:917px;width:452px;background:#FFFFFF">Geschäftsprozesse</div>
<div class="c" style="left:1370px;width:71px;background:#FFFFFF;padding-left:1px">1-6</div>
<div class="c" style="left:1442px;width:71px;background:#FFFFFF;padding-left:1px">1-6</div>
<div class="c" style="left:1514px;width:56px;background:#FFFFFF;padding-left:1px">Wort</div>
<div class="del" style="left:1571px"><svg width="19" height="17" viewBox="0 0 19 17"><use href="#redx"/></svg></div>
</div>
<div class="row" style="top:694px">
<div class="c r" style="left:19px;width:39px;background:#CAD8F6">14</div>
<div class="c" style="left:59px;width:242px;background:#CAD8F6">Fach</div>
<div class="c" style="left:302px;width:296px;background:#CAD8F6">Praktische Übungen</div>
<div class="c" style="left:599px;width:137px;background:#EBF1FF;padding-left:1px">Pflichtunt</div>
<div class="c r" style="left:737px;width:44px;background:#EBF1FF">1</div>
<div class="c r" style="left:782px;width:44px;background:#EBF1FF">1</div>
<div class="c r" style="left:827px;width:44px;background:#EBF1FF">1</div>
<div class="c r" style="left:872px;width:44px;background:#EBF1FF">1</div>
<div class="c" style="left:917px;width:452px;background:#EBF1FF">Praktische Übungen</div>
<div class="c" style="left:1370px;width:71px;background:#EBF1FF;padding-left:1px">1-6</div>
<div class="c" style="left:1442px;width:71px;background:#EBF1FF;padding-left:1px">1-6</div>
<div class="c" style="left:1514px;width:56px;background:#EBF1FF;padding-left:1px">Wort</div>
<div class="del" style="left:1571px"><svg width="19" height="17" viewBox="0 0 19 17"><use href="#redx"/></svg></div>
</div>
<div class="row" style="top:712px">
<div class="c r" style="left:19px;width:39px;background:#E8E8F2">15</div>
<div class="c" style="left:59px;width:242px;background:#E8E8F2">Fach</div>
<div class="c" style="left:302px;width:296px;background:#E8E8F2">Büromanagement</div>
<div class="c" style="left:599px;width:137px;background:#FFFFFF;padding-left:1px">Pflichtunt</div>
<div class="c r" style="left:737px;width:44px;background:#FFFFFF">1</div>
<div class="c r" style="left:782px;width:44px;background:#FFFFFF">1</div>
<div class="c r" style="left:827px;width:44px;background:#FFFFFF">1</div>
<div class="c r" style="left:872px;width:44px;background:#FFFFFF">1</div>
<div class="c" style="left:917px;width:452px;background:#FFFFFF">Büromanagement</div>
<div class="c" style="left:1370px;width:71px;background:#FFFFFF;padding-left:1px">1-6</div>
<div class="c" style="left:1442px;width:71px;background:#FFFFFF;padding-left:1px">1-6</div>
<div class="c" style="left:1514px;width:56px;background:#FFFFFF;padding-left:1px">Wort</div>
<div class="del" style="left:1571px"><svg width="19" height="17" viewBox="0 0 19 17"><use href="#redx"/></svg></div>
</div>
<div class="row" style="top:730px">
<div class="c r" style="left:19px;width:39px;background:#CAD8F6">16</div>
<div class="c" style="left:59px;width:242px;background:#CAD8F6">Fach</div>
<div class="c" style="left:302px;width:296px;background:#CAD8F6">Juniorenfirma</div>
<div class="c" style="left:599px;width:137px;background:#EBF1FF;padding-left:1px">Pflichtunt</div>
<div class="c r" style="left:737px;width:44px;background:#EBF1FF">1</div>
<div class="c r" style="left:782px;width:44px;background:#EBF1FF">1</div>
<div class="c r" style="left:827px;width:44px;background:#EBF1FF">1</div>
<div class="c r" style="left:872px;width:44px;background:#EBF1FF">1</div>
<div class="c" style="left:917px;width:452px;background:#EBF1FF">Juniorenfirma</div>
<div class="c" style="left:1370px;width:71px;background:#EBF1FF;padding-left:1px">1-6</div>
<div class="c" style="left:1442px;width:71px;background:#EBF1FF;padding-left:1px">1-6</div>
<div class="c" style="left:1514px;width:56px;background:#EBF1FF;padding-left:1px">Wort</div>
<div class="del" style="left:1571px"><svg width="19" height="17" viewBox="0 0 19 17"><use href="#redx"/></svg></div>
</div>
<div class="row" style="top:748px">
<div class="c r" style="left:19px;width:39px;background:#E8E8F2">17</div>
<div class="c" style="left:59px;width:242px;background:#E8E8F2">Fach</div>
<div class="c" style="left:302px;width:296px;background:#E8E8F2">Pflegeübungen und -dokumentation</div>
<div class="c" style="left:599px;width:137px;background:#FFFFFF;padding-left:1px">Pflichtunt</div>
<div class="c r" style="left:737px;width:44px;background:#FFFFFF">1</div>
<div class="c r" style="left:782px;width:44px;background:#FFFFFF">1</div>
<div class="c r" style="left:827px;width:44px;background:#FFFFFF">1</div>
<div class="c r" style="left:872px;width:44px;background:#FFFFFF">1</div>
<div class="c" style="left:917px;width:452px;background:#FFFFFF">Pflegeübungen und -dokumentation</div>
<div class="c" style="left:1370px;width:71px;background:#FFFFFF;padding-left:1px">1-6</div>
<div class="c" style="left:1442px;width:71px;background:#FFFFFF;padding-left:1px">1-6</div>
<div class="c" style="left:1514px;width:56px;background:#FFFFFF;padding-left:1px">Wort</div>
<div class="del" style="left:1571px"><svg width="19" height="17" viewBox="0 0 19 17"><use href="#redx"/></svg></div>
</div>
<div class="row" style="top:766px">
<div class="c r" style="left:19px;width:39px;background:#CAD8F6">18</div>
<div class="c" style="left:59px;width:242px;background:#CAD8F6">Fach</div>
<div class="c" style="left:302px;width:296px;background:#CAD8F6">Projektarbeit</div>
<div class="c" style="left:599px;width:137px;background:#EBF1FF;padding-left:1px">Pflichtunt</div>
<div class="c r" style="left:737px;width:44px;background:#EBF1FF">1</div>
<div class="c r" style="left:782px;width:44px;background:#EBF1FF">1</div>
<div class="c r" style="left:827px;width:44px;background:#EBF1FF">1</div>
<div class="c r" style="left:872px;width:44px;background:#EBF1FF">1</div>
<div class="c" style="left:917px;width:452px;background:#EBF1FF">Projektarbeit</div>
<div class="c" style="left:1370px;width:71px;background:#EBF1FF;padding-left:1px">1-6</div>
<div class="c" style="left:1442px;width:71px;background:#EBF1FF;padding-left:1px">1-6</div>
<div class="c" style="left:1514px;width:56px;background:#EBF1FF;padding-left:1px">Wort</div>
<div class="del" style="left:1571px"><svg width="19" height="17" viewBox="0 0 19 17"><use href="#redx"/></svg></div>
</div>
<div class="row" style="top:784px">
<div class="c r" style="left:19px;width:39px;background:#E8E8F2">19</div>
<div class="c" style="left:59px;width:242px;background:#E8E8F2">Fach</div>
<div class="c" style="left:302px;width:296px;background:#E8E8F2">Übungsfirma</div>
<div class="c" style="left:599px;width:137px;background:#FFFFFF;padding-left:1px">Pflichtunt</div>
<div class="c r" style="left:737px;width:44px;background:#FFFFFF">1</div>
<div class="c r" style="left:782px;width:44px;background:#FFFFFF">1</div>
<div class="c r" style="left:827px;width:44px;background:#FFFFFF">1</div>
<div class="c r" style="left:872px;width:44px;background:#FFFFFF">1</div>
<div class="c" style="left:917px;width:452px;background:#FFFFFF">Übungsfirma</div>
<div class="c" style="left:1370px;width:71px;background:#FFFFFF;padding-left:1px">1-6</div>
<div class="c" style="left:1442px;width:71px;background:#FFFFFF;padding-left:1px">1-6</div>
<div class="c" style="left:1514px;width:56px;background:#FFFFFF;padding-left:1px">Wort</div>
<div class="del" style="left:1571px"><svg width="19" height="17" viewBox="0 0 19 17"><use href="#redx"/></svg></div>
</div>
<div class="row" style="top:802px">
<div class="c r" style="left:19px;width:39px;background:#CAD8F6">20</div>
<div class="c" style="left:59px;width:242px;background:#CAD8F6">Fach</div>
<div class="c" style="left:302px;width:296px;background:#CAD8F6">Wirtschaft und Recht II</div>
<div class="c" style="left:599px;width:137px;background:#EBF1FF;padding-left:1px">Wahlunt</div>
<div class="c r" style="left:737px;width:44px;background:#EBF1FF">1</div>
<div class="c r" style="left:782px;width:44px;background:#EBF1FF">1</div>
<div class="c r" style="left:827px;width:44px;background:#EBF1FF">1</div>
<div class="c r" style="left:872px;width:44px;background:#EBF1FF">1</div>
<div class="c" style="left:917px;width:452px;background:#EBF1FF">Wirtschaft und Recht II</div>
<div class="c" style="left:1370px;width:71px;background:#EBF1FF;padding-left:1px">1-6</div>
<div class="c" style="left:1442px;width:71px;background:#EBF1FF;padding-left:1px">1-6</div>
<div class="c" style="left:1514px;width:56px;background:#EBF1FF;padding-left:1px">Wort</div>
<div class="del" style="left:1571px"><svg width="19" height="17" viewBox="0 0 19 17"><use href="#redx"/></svg></div>
</div>
<div class="row" style="top:820px">
<div class="c r" style="left:19px;width:39px;background:#E8E8F2">21</div>
<div class="c" style="left:59px;width:242px;background:#E8E8F2">Fach</div>
<div class="c" style="left:302px;width:296px;background:#E8E8F2">2. Fremdsprache</div>
<div class="c" style="left:599px;width:137px;background:#FFFFFF;padding-left:1px">Wahlunt</div>
<div class="c r" style="left:737px;width:44px;background:#FFFFFF">1</div>
<div class="c r" style="left:782px;width:44px;background:#FFFFFF">1</div>
<div class="c r" style="left:827px;width:44px;background:#FFFFFF">1</div>
<div class="c r" style="left:872px;width:44px;background:#FFFFFF">1</div>
<div class="c" style="left:917px;width:452px;background:#FFFFFF">2. Fremdsprache</div>
<div class="c" style="left:1370px;width:71px;background:#FFFFFF;padding-left:1px">1-6</div>
<div class="c" style="left:1442px;width:71px;background:#FFFFFF;padding-left:1px">1-6</div>
<div class="c" style="left:1514px;width:56px;background:#FFFFFF;padding-left:1px">Wort</div>
<div class="del" style="left:1571px"><svg width="19" height="17" viewBox="0 0 19 17"><use href="#redx"/></svg></div>
</div>
<div class="row" style="top:838px">
<div class="c r" style="left:19px;width:39px;background:#CAD8F6">22</div>
<div class="c" style="left:59px;width:242px;background:#EBF1FF">Bemerkungen</div>
<div class="c" style="left:302px;width:296px;background:#EBF1FF">Bemerkungen</div>
<div class="c" style="left:599px;width:137px;background:#CAD8F6;padding-left:1px"></div>
<div class="c r" style="left:737px;width:44px;background:#CAD8F6"></div>
<div class="c r" style="left:782px;width:44px;background:#CAD8F6"></div>
<div class="c r" style="left:827px;width:44px;background:#CAD8F6"></div>
<div class="c r" style="left:872px;width:44px;background:#CAD8F6"></div>
<div class="c" style="left:917px;width:452px;background:#EBF1FF">Bemerkungen</div>
<div class="c" style="left:1370px;width:71px;background:#CAD8F6;padding-left:1px"></div>
<div class="c" style="left:1442px;width:71px;background:#CAD8F6;padding-left:1px"></div>
<div class="c" style="left:1514px;width:56px;background:#CAD8F6;padding-left:1px"></div>
<div class="del" style="left:1571px"><svg width="19" height="17" viewBox="0 0 19 17"><use href="#redx"/></svg></div>
</div>
<div class="row" style="top:856px">
<div class="c r" style="left:19px;width:39px;background:#E8E8F2">23</div>
<div class="c" style="left:59px;width:242px;background:#FFFFFF">wiederholt</div>
<div class="c" style="left:302px;width:296px;background:#FFFFFF">wiederholt</div>
<div class="c" style="left:599px;width:137px;background:#E8E8F2;padding-left:1px"></div>
<div class="c r" style="left:737px;width:44px;background:#E8E8F2"></div>
<div class="c r" style="left:782px;width:44px;background:#E8E8F2"></div>
<div class="c r" style="left:827px;width:44px;background:#E8E8F2"></div>
<div class="c r" style="left:872px;width:44px;background:#E8E8F2"></div>
<div class="c" style="left:917px;width:452px;background:#FFFFFF">wiederholt</div>
<div class="c" style="left:1370px;width:71px;background:#E8E8F2;padding-left:1px"></div>
<div class="c" style="left:1442px;width:71px;background:#E8E8F2;padding-left:1px"></div>
<div class="c" style="left:1514px;width:56px;background:#E8E8F2;padding-left:1px"></div>
<div class="del" style="left:1571px"><svg width="19" height="17" viewBox="0 0 19 17"><use href="#redx"/></svg></div>
</div>
<div class="row" style="top:874px">
<div class="c r" style="left:19px;width:39px;background:#CAD8F6">24</div>
<div class="c" style="left:59px;width:242px;background:#EBF1FF">bestanden</div>
<div class="c" style="left:302px;width:296px;background:#EBF1FF">bestanden</div>
<div class="c" style="left:599px;width:137px;background:#CAD8F6;padding-left:1px"></div>
<div class="c r" style="left:737px;width:44px;background:#CAD8F6"></div>
<div class="c r" style="left:782px;width:44px;background:#CAD8F6"></div>
<div class="c r" style="left:827px;width:44px;background:#CAD8F6"></div>
<div class="c r" style="left:872px;width:44px;background:#CAD8F6"></div>
<div class="c" style="left:917px;width:452px;background:#EBF1FF">bestanden</div>
<div class="c" style="left:1370px;width:71px;background:#CAD8F6;padding-left:1px"></div>
<div class="c" style="left:1442px;width:71px;background:#CAD8F6;padding-left:1px"></div>
<div class="c" style="left:1514px;width:56px;background:#CAD8F6;padding-left:1px"></div>
<div class="del" style="left:1571px"><svg width="19" height="17" viewBox="0 0 19 17"><use href="#redx"/></svg></div>
</div>
<div class="row" style="top:892px">
<div class="c r" style="left:19px;width:39px;background:#E8E8F2">25</div>
<div class="c" style="left:59px;width:242px;background:#FFFFFF">Zusatzprüfung</div>
<div class="c" style="left:302px;width:296px;background:#FFFFFF">Zusatzprüfung</div>
<div class="c" style="left:599px;width:137px;background:#E8E8F2;padding-left:1px"></div>
<div class="c r" style="left:737px;width:44px;background:#E8E8F2"></div>
<div class="c r" style="left:782px;width:44px;background:#E8E8F2"></div>
<div class="c r" style="left:827px;width:44px;background:#E8E8F2"></div>
<div class="c r" style="left:872px;width:44px;background:#E8E8F2"></div>
<div class="c" style="left:917px;width:452px;background:#FFFFFF">Zusatzprüfung</div>
<div class="c" style="left:1370px;width:71px;background:#E8E8F2;padding-left:1px"></div>
<div class="c" style="left:1442px;width:71px;background:#E8E8F2;padding-left:1px"></div>
<div class="c" style="left:1514px;width:56px;background:#E8E8F2;padding-left:1px"></div>
<div class="del" style="left:1571px"><svg width="19" height="17" viewBox="0 0 19 17"><use href="#redx"/></svg></div>
</div>
<div class="row" style="top:910px">
<div class="c r" style="left:19px;width:39px;background:#CAD8F6">26</div>
<div class="c" style="left:59px;width:242px;background:#EBF1FF">Projektarbeit (Thema)</div>
<div class="c" style="left:302px;width:296px;background:#EBF1FF">Projektarbeit (Thema)</div>
<div class="c" style="left:599px;width:137px;background:#CAD8F6;padding-left:1px"></div>
<div class="c r" style="left:737px;width:44px;background:#CAD8F6"></div>
<div class="c r" style="left:782px;width:44px;background:#CAD8F6"></div>
<div class="c r" style="left:827px;width:44px;background:#CAD8F6"></div>
<div class="c r" style="left:872px;width:44px;background:#CAD8F6"></div>
<div class="c" style="left:917px;width:452px;background:#EBF1FF">Projektarbeit (Thema)</div>
<div class="c" style="left:1370px;width:71px;background:#CAD8F6;padding-left:1px"></div>
<div class="c" style="left:1442px;width:71px;background:#CAD8F6;padding-left:1px"></div>
<div class="c" style="left:1514px;width:56px;background:#CAD8F6;padding-left:1px"></div>
<div class="del" style="left:1571px"><svg width="19" height="17" viewBox="0 0 19 17"><use href="#redx"/></svg></div>
</div>
<div class="row" style="top:928px">
<div class="c r" style="left:19px;width:39px;background:#E8E8F2">27</div>
<div class="c" style="left:59px;width:242px;background:#FFFFFF">Lob / Preis</div>
<div class="c" style="left:302px;width:296px;background:#FFFFFF">Lob / Preis</div>
<div class="c" style="left:599px;width:137px;background:#E8E8F2;padding-left:1px"></div>
<div class="c r" style="left:737px;width:44px;background:#E8E8F2"></div>
<div class="c r" style="left:782px;width:44px;background:#E8E8F2"></div>
<div class="c r" style="left:827px;width:44px;background:#E8E8F2"></div>
<div class="c r" style="left:872px;width:44px;background:#E8E8F2"></div>
<div class="c" style="left:917px;width:452px;background:#FFFFFF">Lob / Preis</div>
<div class="c" style="left:1370px;width:71px;background:#E8E8F2;padding-left:1px"></div>
<div class="c" style="left:1442px;width:71px;background:#E8E8F2;padding-left:1px"></div>
<div class="c" style="left:1514px;width:56px;background:#E8E8F2;padding-left:1px"></div>
<div class="del" style="left:1571px"><svg width="19" height="17" viewBox="0 0 19 17"><use href="#redx"/></svg></div>
</div>
<div class="row" style="top:946px">
<div class="c r" style="left:19px;width:39px;background:#CAD8F6">28</div>
<div class="c" style="left:59px;width:242px;background:#EBF1FF">Durchschnitt 1</div>
<div class="c" style="left:302px;width:296px;background:#EBF1FF">Lob / Preis</div>
<div class="c" style="left:599px;width:137px;background:#CAD8F6;padding-left:1px"></div>
<div class="c r" style="left:737px;width:44px;background:#CAD8F6"></div>
<div class="c r" style="left:782px;width:44px;background:#CAD8F6"></div>
<div class="c r" style="left:827px;width:44px;background:#CAD8F6"></div>
<div class="c r" style="left:872px;width:44px;background:#CAD8F6"></div>
<div class="c" style="left:917px;width:452px;background:#EBF1FF">Durchschnitt 1</div>
<div class="c" style="left:1370px;width:71px;background:#CAD8F6;padding-left:1px"></div>
<div class="c" style="left:1442px;width:71px;background:#CAD8F6;padding-left:1px"></div>
<div class="c" style="left:1514px;width:56px;background:#CAD8F6;padding-left:1px"></div>
<div class="del" style="left:1571px"><svg width="19" height="17" viewBox="0 0 19 17"><use href="#redx"/></svg></div>
</div>
<div class="row" style="top:964px">
<div class="c" style="left:19px;width:39px;background:#E8E8F2"></div>
<div class="c" style="left:59px;width:242px;background:#E8E8F2"></div>
<div class="c" style="left:302px;width:296px;background:#E8E8F2"></div>
<div class="c" style="left:599px;width:137px;background:#E8E8F2"></div>
<div class="c" style="left:737px;width:44px;background:#E8E8F2"></div>
<div class="c" style="left:782px;width:44px;background:#E8E8F2"></div>
<div class="c" style="left:827px;width:44px;background:#E8E8F2"></div>
<div class="c" style="left:872px;width:44px;background:#E8E8F2"></div>
<div class="c" style="left:917px;width:452px;background:#E8E8F2"></div>
<div class="c" style="left:1370px;width:71px;background:#E8E8F2"></div>
<div class="c" style="left:1442px;width:71px;background:#E8E8F2"></div>
<div class="c" style="left:1514px;width:56px;background:#E8E8F2"></div>
<div class="del2" style="left:1571px"><svg width="19" height="17" viewBox="0 0 19 17"><use href="#grayx"/></svg></div>
</div>
</div>
<div style="left:1592px;top:460px;width:9px;height:527px;background:#FBFBFE"></div>
<div style="left:1594px;top:461px;width:8px;height:15px;background:linear-gradient(#F4F4F8,#E9E9EE)"></div>
<svg style="left:1595px;top:464px" width="10" height="8" viewBox="0 0 10 8"><use href="#chevup"/></svg>
<div style="left:1591px;top:426px;width:20px;height:34px;box-sizing:border-box;border:1.5px solid #1F3E7C;border-radius:3px;background:linear-gradient(#FFFFFF 50%,#DADAE4)"></div>
<svg style="left:1595px;top:436px" width="8" height="11" viewBox="0 0 8 11"><use href="#chooser"/></svg>
</div>
</body>
</html>
